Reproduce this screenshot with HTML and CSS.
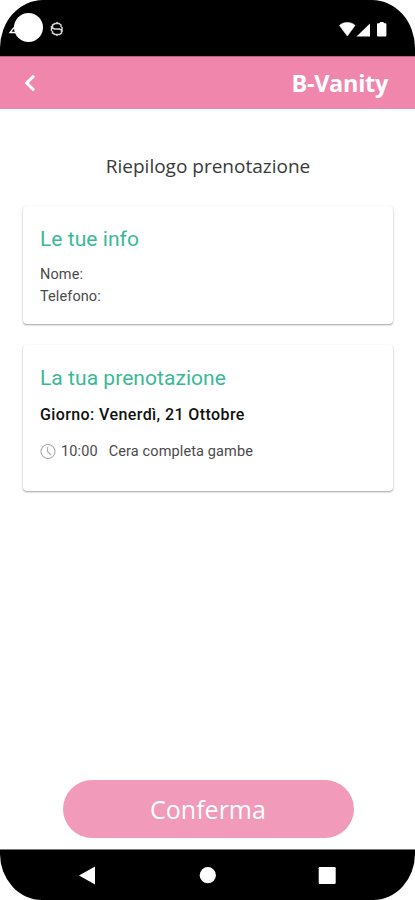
FILE: index.html
```html
<!DOCTYPE html>
<html lang="it">
<head>
<meta charset="utf-8">
<meta name="viewport" content="width=device-width">
<title>B-Vanity</title>
<link rel="stylesheet" href="styles.css">
</head>
<body>
<div class="phone">
  <div class="status">
    <svg class="status-left" width="70" height="56" viewBox="0 0 70 56">
      <path d="M14 27.500 10 32.500h5" fill="none" stroke="#fff" stroke-width="1.300"/>
      <circle cx="28.500" cy="27.500" r="14.500" fill="#fff"/>
      <path d="M61 27v-2l-2-1.500h-4l-2.500 1.500v3l2 1h5l2 1v3l-2 1.500h-4.500L52.500 33v-2M57 22v1.500M57 34.500V36M51.500 26v5M62 27v5" fill="none" stroke="#d5d5d5" stroke-width="1.500"/>
    </svg>
    <svg class="status-right" width="60" height="56" viewBox="0 0 60 56">
      <path d="M.5 25.500c3.500-4 12-4 15.500 0L8.300 36z" fill="#fff" stroke="#fff" stroke-linejoin="round" stroke-width=".6"/>
      <path d="M31 23.500V36.500H17.500z" fill="#fff"/>
      <path d="M39 23.300h1.200l1.300-1.300h2.600l1.300 1.300h1q1 0 1 1v11.200q0 1-1 1H39q-1 0-1-1V24.300q0-1 1-1z" fill="#fff"/>
    </svg>
  </div>
  <header class="appbar">
    <svg width="14" height="20" viewBox="0 0 14 20"><path d="M11 2.800 3.700 10l7.300 7.200" fill="none" stroke="#fff" stroke-width="3"/></svg>
    <span class="brand">B-Vanity</span>
  </header>
  <main>
    <h1>Riepilogo prenotazione</h1>
    <section class="card info">
      <h2>Le tue info</h2>
      <p class="contact">Nome:</p>
      <p class="contact">Telefono:</p>
    </section>
    <section class="card booking">
      <h2>La tua prenotazione</h2>
      <p class="day">Giorno: Venerdì, 21 Ottobre</p>
      <div class="slot">
        <svg width="16" height="16" viewBox="0 0 16 16" fill="none" stroke="#aaa" stroke-width="1.100"><circle cx="8" cy="8.500" r="7"/><path d="M7.500 4v4.500l3.500 3.500"/></svg>
        <span class="time">10:00</span>
        <span class="service">Cera completa gambe</span>
      </div>
    </section>
    <button class="confirm" type="button">Conferma</button>
  </main>
  <nav class="navbar">
    <svg width="415" height="50" viewBox="0 0 415 50" fill="#fff">
      <path d="M79 25.500 95 16.500V34.500z"/>
      <circle cx="207.800" cy="25.200" r="8.100"/>
      <rect x="318.700" y="17" width="17" height="17" rx="1.200"/>
    </svg>
  </nav>
</div>
</body>
</html>
```
FILE: styles.css
```css
* { box-sizing: border-box; margin: 0; padding: 0; }
body { background: #fff; font-family: Roboto, "Liberation Sans", sans-serif; }
.phone { width: 415px; height: 900px; display: flex; flex-direction: column; overflow: hidden; }
.status { height: 56px; background: #000; border-radius: 43px 43px 0 0 / 48px 48px 0 0; display: flex; justify-content: space-between; }
.status svg { display: block; }
.status-right { margin-right: 16px; }
.appbar { height: 53px; background: #f086ac; border-top: 1px solid #b9607f; display: flex; align-items: center; justify-content: space-between; padding: 0 27px 0 23px; }
.brand { font: 700 23.500px/34px "Open Sans", sans-serif; letter-spacing: -.3px; color: #fff; }
main { flex: 1; display: flex; flex-direction: column; align-items: center; border-bottom: 1px solid #777; padding: 0 0 11px 1px; }
h1 { font: 400 19px/28px "Open Sans", sans-serif; color: #3a3a3a; margin-top: 43px; white-space: nowrap; }
.card { width: 370px; border-radius: 4px; background: #fff; box-shadow: 0 1px 2px rgba(0,0,0,.38), 0 0 1px rgba(0,0,0,.05); padding: 0 17px; white-space: nowrap; }
.info { height: 118px; margin-top: 26px; padding-top: 19px; }
.booking { height: 146px; margin-top: 21px; padding-top: 19px; }
h2 { font-size: 21px; line-height: 28px; font-weight: 400; letter-spacing: .05px; color: #3ab996; }
h2 + .contact { margin-top: 11px; }
.contact { font-size: 14.500px; line-height: 22px; letter-spacing: .1px; color: #4a4a4a; }
.day { font-size: 16px; line-height: 22px; font-weight: 500; letter-spacing: .4px; color: #111; margin-top: 12px; }
.slot { display: flex; align-items: center; height: 22px; margin-top: 14px; font-size: 14.500px; letter-spacing: .12px; color: #4a4a4a; }
.time { margin-left: 5px; }
.service { margin-left: 11px; }
.confirm { margin-top: auto; width: 291px; height: 58px; border: 0; border-radius: 29px; background: #f19ab9; color: #fff; font: 400 25px/34px "Open Sans", sans-serif; }
.navbar { height: 50px; background: #000; border-radius: 0 0 42px 42px / 0 0 46px 46px; }
.navbar svg { display: block; }
```
